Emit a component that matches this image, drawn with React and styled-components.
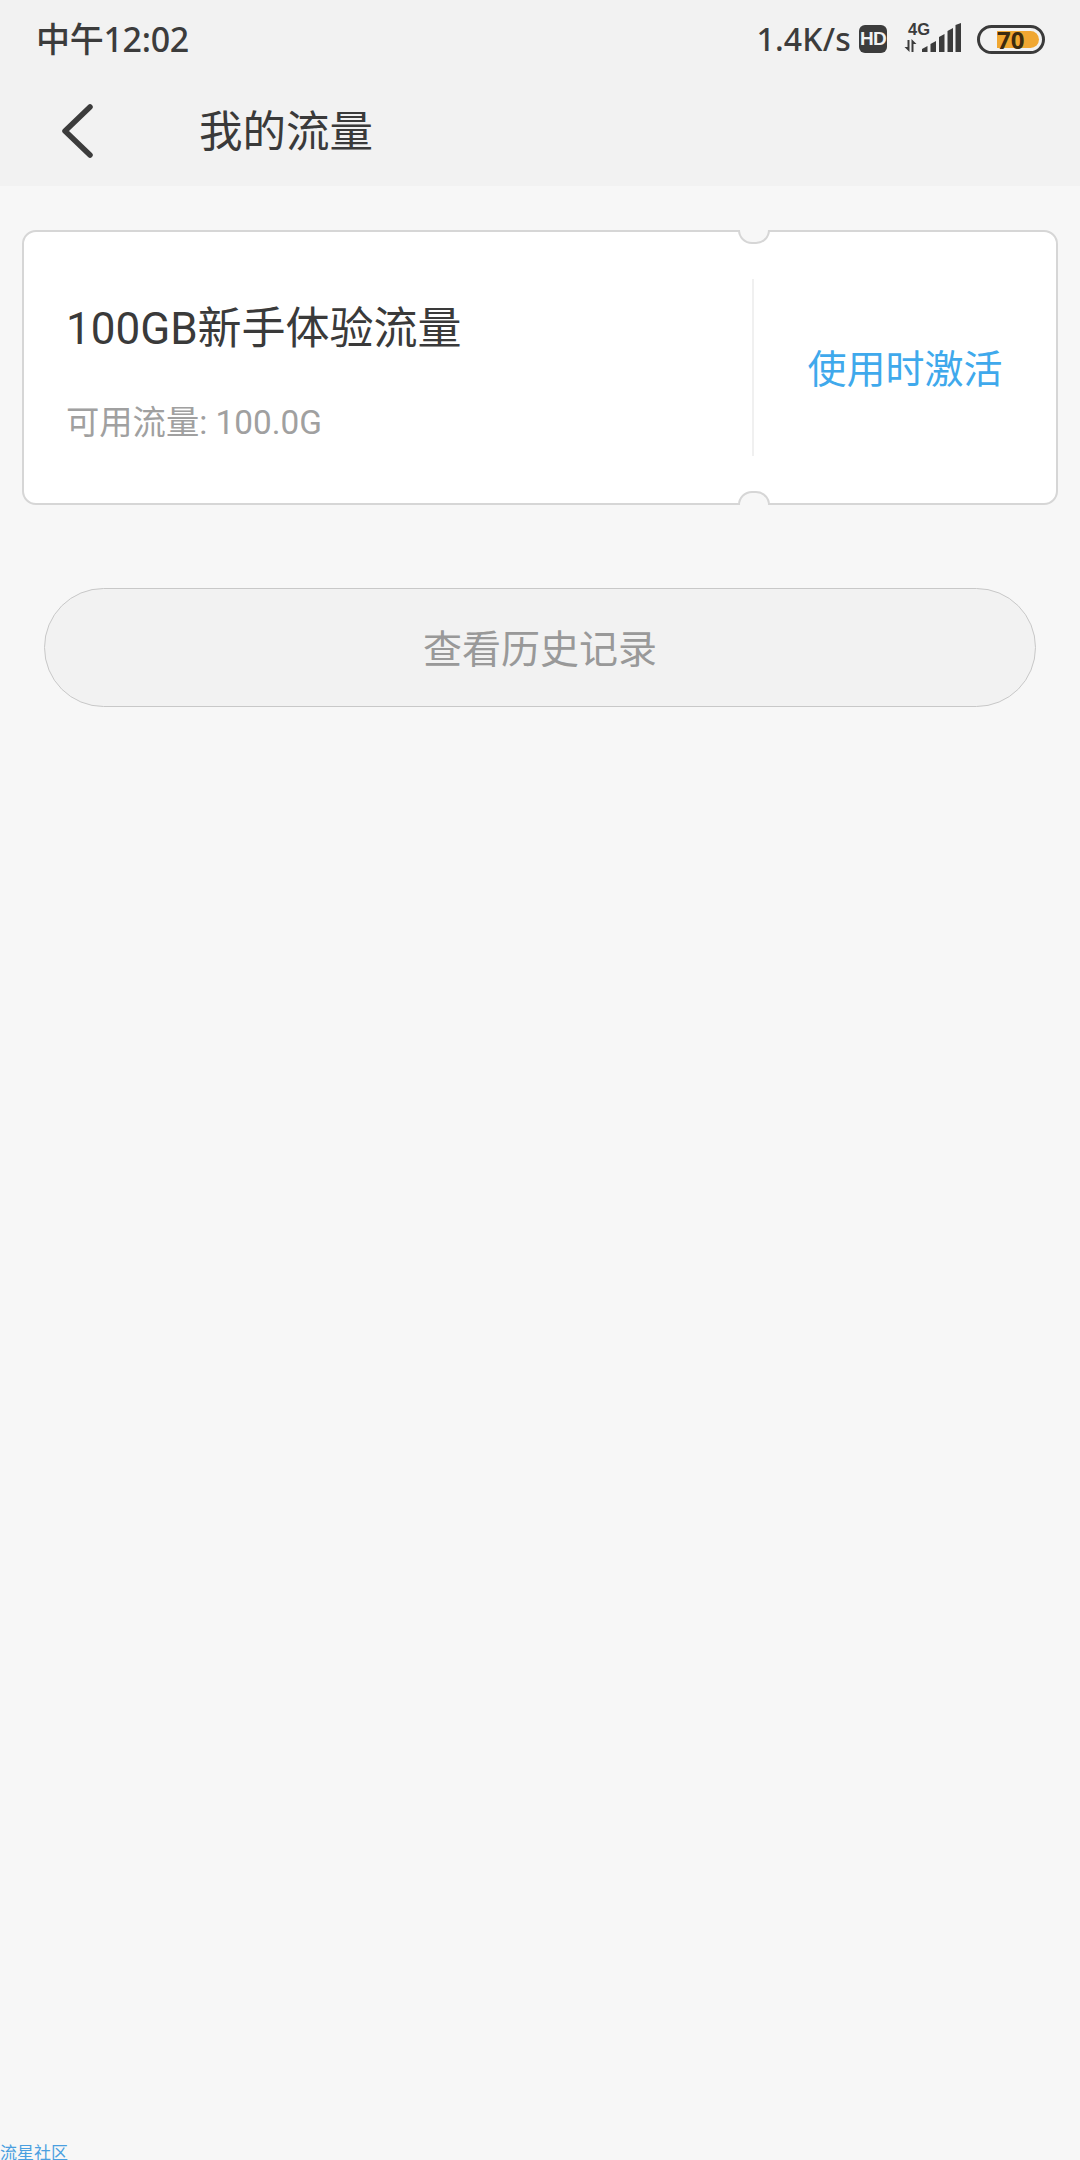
import React from "react";
import styled, { createGlobalStyle } from "styled-components";

const Global = createGlobalStyle`
  html, body { margin: 0; padding: 0; background: #f7f7f7; }
  body { font-family: Roboto, "Noto Sans CJK SC", sans-serif; }
  * { box-sizing: border-box; }
`;
const Page = styled.div`
  width: 1080px; height: 2160px; background: #f7f7f7;
  display: flex; flex-direction: column; overflow: hidden;
`;
const Header = styled.header`
  height: 186px; background: #f2f2f2; display: flex; flex-direction: column;
`;
const StatusBar = styled.div`
  height: 78px; padding: 0 35px 0 36px; display: flex; align-items: center; justify-content: space-between;
  color: #3c3c3c; font-family: "Noto Sans", "Noto Sans CJK SC", sans-serif; font-weight: 500;
`;
const Time = styled.span`
  font-size: 34px; line-height: 78px; font-weight: 500; letter-spacing: -0.3px;
`;
const StatusRight = styled.div`
  display: flex; align-items: center; height: 78px;
`;
const Speed = styled.span` font-size: 32px; line-height: 78px; letter-spacing: 0.2px; `;
const HdBadge = styled.span`
  width: 28px; height: 28px; margin-left: 8px; border-radius: 6px; background: #3c3c3c; color: #f2f2f2;
  font: 700 19px/28px "Liberation Sans", sans-serif; text-align: center; letter-spacing: -0.8px;
`;
const Signal = styled.div`
  position: relative; width: 57px; height: 30px; margin-left: 17px; margin-bottom: 2px;
`;
const NetLabel = styled.span`
  position: absolute; left: 4px; top: -2px; font: 700 16.5px/16px "Liberation Sans", sans-serif; color: #3c3c3c;
`;
const Battery = styled.div`
  position: relative; width: 68px; height: 29px; margin-left: 16px; border: 3px solid #3b3b3b; border-radius: 15px;
  display: flex; justify-content: flex-end; padding: 3px;
`;
const BatteryFill = styled.div`
  width: 42px; height: 17px; background: #f0a732; border-radius: 0 9px 9px 0;
`;
const BatteryText = styled.span`
  position: absolute; left: 17px; top: -3px; font: 700 24px/29px "Noto Sans", sans-serif; color: #3b2a10;
`;
const NavBar = styled.div`
  flex: 1; display: flex; align-items: center; padding-left: 61px; padding-bottom: 6px;
`;
const BackIcon = styled.svg` width: 32px; height: 54px; display: block; margin-top: 3px; `;
const Title = styled.h1`
  margin: 0 0 0 106px; font-size: 43.5px; line-height: 60px; font-weight: 400; color: #3a3a3a;
  font-family: "Noto Sans CJK SC", sans-serif;
`;
const Ticket = styled.section`
  position: relative; margin: 44px 22px 0 22px; height: 275px; background: #fff;
  border: 2px solid #d6d6d6; border-radius: 14px; display: flex;
`;
const Notch = styled.div`
  position: absolute; left: 714px; width: 32px; height: 14px; background: #f7f7f7; border: 2px solid #d6d6d6;
  ${p => p.$bottom
    ? "bottom: -2px; border-bottom: none; border-radius: 16px 16px 0 0;"
    : "top: -2px; border-top: none; border-radius: 0 0 16px 16px;"}
`;
const TicketInfo = styled.div`
  width: 728px; padding: 66px 0 0 42px; flex: none;
`;
const TicketTitle = styled.div`
  font-size: 44px; line-height: 62px; color: #3a3a3a;
`;
const TicketSub = styled.div`
  margin-top: 41px; font-size: 33.3px; line-height: 44px; color: #a0a0a0;
`;
const Divider = styled.div`
  width: 2px; height: 177px; margin-top: 47px; background: #f0f0f0; flex: none;
`;
const TicketAction = styled.div`
  flex: 1; display: flex; align-items: center; justify-content: center;
  font-size: 39px; color: #3fa9ec; font-family: "Noto Sans CJK SC", sans-serif; padding-bottom: 4px;
`;
const HistoryButton = styled.button`
  display: block; margin: 83px 44px 0; height: 119px; width: 992px; padding: 0 0 3px; border: 1.5px solid #c8c8c8;
  border-radius: 60px; background: #f2f2f2; color: #999;
  font: 400 39px/1 "Noto Sans CJK SC", sans-serif;
`;
const Watermark = styled.div`
  margin-top: auto; height: 17px; font-size: 17px; line-height: 17px; color: #4a9fe0;
  font-family: "Noto Sans CJK SC", sans-serif;
`;

export default function App() {
  return (
    <Page>
      <Global />
      <Header>
        <StatusBar>
          <Time>中午12:02</Time>
          <StatusRight>
            <Speed>1.4K/s</Speed>
            <HdBadge>HD</HdBadge>
            <Signal>
              <NetLabel>4G</NetLabel>
              <svg width="57" height="30" viewBox="0 0 57 30" style={{ display: "block" }}>
                <g fill="#3c3c3c">
                  <path d="M3.5 17h2v12l-5-5h3z" />
                  <path d="M7.5 29h2V21h3l-5-5z" />
                  <path d="M18 26l5.5-3V29H18z" />
                  <path d="M26.5 21l5.5-3V29h-5.5z" />
                  <path d="M35 14l5.5-3V29H35z" />
                  <path d="M43.5 8l5.5-3V29h-5.5z" />
                  <path d="M51.5 2l5.5-2V29h-5.5z" />
                </g>
              </svg>
            </Signal>
            <Battery>
              <BatteryFill />
              <BatteryText>70</BatteryText>
            </Battery>
          </StatusRight>
        </StatusBar>
        <NavBar>
          <BackIcon viewBox="0 0 32 54">
            <path d="M29 3 L4 27 L29 51" fill="none" stroke="#3c3c3c" strokeWidth="5.5" strokeLinecap="round" strokeLinejoin="round" />
          </BackIcon>
          <Title>我的流量</Title>
        </NavBar>
      </Header>
      <Ticket>
        <Notch />
        <Notch $bottom />
        <TicketInfo>
          <TicketTitle>100GB新手体验流量</TicketTitle>
          <TicketSub>可用流量: 100.0G</TicketSub>
        </TicketInfo>
        <Divider />
        <TicketAction>使用时激活</TicketAction>
      </Ticket>
      <HistoryButton>查看历史记录</HistoryButton>
      <Watermark>流星社区</Watermark>
    </Page>
  );
}
